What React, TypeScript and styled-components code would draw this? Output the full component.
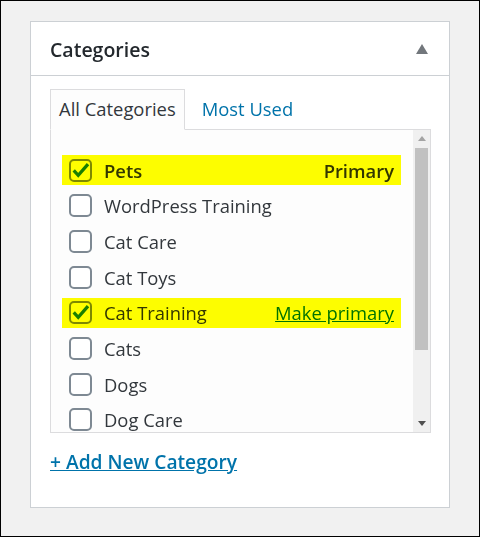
import React from "react";
import styled, { createGlobalStyle } from "styled-components";

interface Category {
	name: string;
	checked: boolean;
	primary?: boolean;
}

const CATEGORIES: Category[] = [
	{ name: "Pets", checked: true, primary: true },
	{ name: "WordPress Training", checked: false },
	{ name: "Cat Care", checked: false },
	{ name: "Cat Toys", checked: false },
	{ name: "Cat Training", checked: true },
	{ name: "Cats", checked: false },
	{ name: "Dogs", checked: false },
	{ name: "Dog Care", checked: false },
];

const App = () => {
	return (
		<>
			<GlobalStyle />
			<FrameTag>
				<PanelTag>
					<HeaderTag>
						<h2>Categories</h2>
						<svg width="12" height="10" viewBox="0 0 12 10">
							<polygon points="6,0 12,10 0,10" fill="#72777c" />
						</svg>
					</HeaderTag>
					<BodyTag>
						<TabsTag>
							<TabTag $active>All Categories</TabTag>
							<TabTag>Most Used</TabTag>
						</TabsTag>
						<ListTag>
							<ItemsTag>
								{CATEGORIES.map((cat) => (
									<RowTag key={cat.name} $marked={cat.checked}>
										<BoxTag>
											{cat.checked && (
												<svg width="21" height="21" viewBox="0 0 21 21">
													<path
														d="M3 10.4 L8 15.8 L18.8 3.4"
														fill="none"
														stroke="#1a7fb0"
														strokeWidth="3.6"
														strokeLinejoin="miter"
													/>
												</svg>
											)}
										</BoxTag>
										<LabelTag $bold={cat.primary}>{cat.name}</LabelTag>
										{cat.checked &&
											(cat.primary ? (
												<PrimaryTag>Primary</PrimaryTag>
											) : (
												<MakePrimaryTag href="#">Make primary</MakePrimaryTag>
											))}
									</RowTag>
								))}
							</ItemsTag>
							<ScrollbarTag>
								<ArrowTag>
									<svg width="8" height="5" viewBox="0 0 8 5">
										<polygon points="4,0 8,5 0,5" fill="#a3a3a3" />
									</svg>
								</ArrowTag>
								<ThumbTag />
								<ArrowTag>
									<svg width="8" height="5" viewBox="0 0 8 5">
										<polygon points="0,0 8,0 4,5" fill="#505050" />
									</svg>
								</ArrowTag>
							</ScrollbarTag>
						</ListTag>
						<AddNewTag href="#">+ Add New Category</AddNewTag>
					</BodyTag>
				</PanelTag>
			</FrameTag>
		</>
	);
};

export default App;

const GlobalStyle = createGlobalStyle`
	html, body {
		margin: 0;
		padding: 0;
	}
	body {
		font-family: "Open Sans", "Noto Sans", sans-serif;
	}
`;

const FrameTag = styled.div`
	width: 480px;
	height: 537px;
	box-sizing: border-box;
	border: 1px solid #000;
	background: #f1f1f1;
	padding: 20px 0 0 29px;
`;

const PanelTag = styled.section`
	width: 420px;
	height: 487px;
	box-sizing: border-box;
	border: 1px solid #ccd0d4;
	background: #fff;
`;

const HeaderTag = styled.header`
	height: 54px;
	box-sizing: border-box;
	border-bottom: 1px solid #ccd0d4;
	display: flex;
	align-items: center;
	justify-content: space-between;
	padding: 3px 21px 0 19px;
	h2 {
		margin: 0;
		font-size: 19.5px;
		line-height: 26px;
		font-weight: 600;
		color: #23282d;
	}
	svg {
		margin-top: -2px;
	}
`;

const BodyTag = styled.div`
	padding: 13px 18px 0 19px;
`;

const TabsTag = styled.div`
	display: flex;
	align-items: flex-end;
	margin-bottom: -1px;
`;

const TabTag = styled.div<{ $active?: boolean }>`
	position: relative;
	z-index: 1;
	padding: 6px 8px 7px;
	margin-left: ${({ $active }) => ($active ? "0" : "8px")};
	font-size: 18.4px;
	line-height: 26px;
	color: ${({ $active }) => ($active ? "#32373c" : "#0073aa")};
	border: 1px solid ${({ $active }) => ($active ? "#dcdcde" : "transparent")};
	border-bottom-color: ${({ $active }) => ($active ? "#fdfdfd" : "transparent")};
	background: ${({ $active }) => ($active ? "#fdfdfd" : "transparent")};
`;

const ListTag = styled.div`
	height: 304px;
	box-sizing: border-box;
	border: 1px solid #dcdcde;
	background: #fdfdfd;
	display: flex;
	overflow: hidden;
`;

const ItemsTag = styled.div`
	flex: 1;
	padding: 25px 12px 0 11px;
	display: flex;
	flex-direction: column;
	gap: 5.7px;
	overflow: hidden;
`;

const RowTag = styled.div<{ $marked?: boolean }>`
	position: relative;
	flex: none;
	height: 30px;
	display: flex;
	align-items: center;
	padding: 0 7px;
	font-size: 18.4px;
	color: #32373c;
	&::after {
		content: "";
		display: ${({ $marked }) => ($marked ? "block" : "none")};
		position: absolute;
		inset: 0;
		background: #ffff00;
		mix-blend-mode: multiply;
		pointer-events: none;
	}
`;

const BoxTag = styled.span`
	width: 23px;
	height: 23px;
	box-sizing: border-box;
	flex: none;
	margin-right: 12px;
	border: 2px solid #7e8993;
	border-radius: 5px;
	background: #fff;
	display: flex;
	align-items: center;
	justify-content: center;
`;

const LabelTag = styled.span<{ $bold?: boolean }>`
	flex: 1;
	font-weight: ${({ $bold }) => ($bold ? 600 : 400)};
`;

const PrimaryTag = styled.span`
	font-weight: 600;
`;

const MakePrimaryTag = styled.a`
	color: #0073aa;
	text-decoration: underline;
`;

const ScrollbarTag = styled.div`
	width: 17px;
	flex: none;
	background: #f0f0f0;
	display: flex;
	flex-direction: column;
`;

const ArrowTag = styled.div`
	height: 17px;
	flex: none;
	display: flex;
	align-items: center;
	justify-content: center;
`;

const ThumbTag = styled.div`
	height: 202px;
	flex: none;
	margin: 1px 2px auto;
	background: #c1c1c1;
`;

const AddNewTag = styled.a`
	display: inline-block;
	margin-top: 16px;
	font-size: 19.2px;
	line-height: 26px;
	font-weight: 600;
	color: #0073aa;
	text-decoration: underline;
`;
